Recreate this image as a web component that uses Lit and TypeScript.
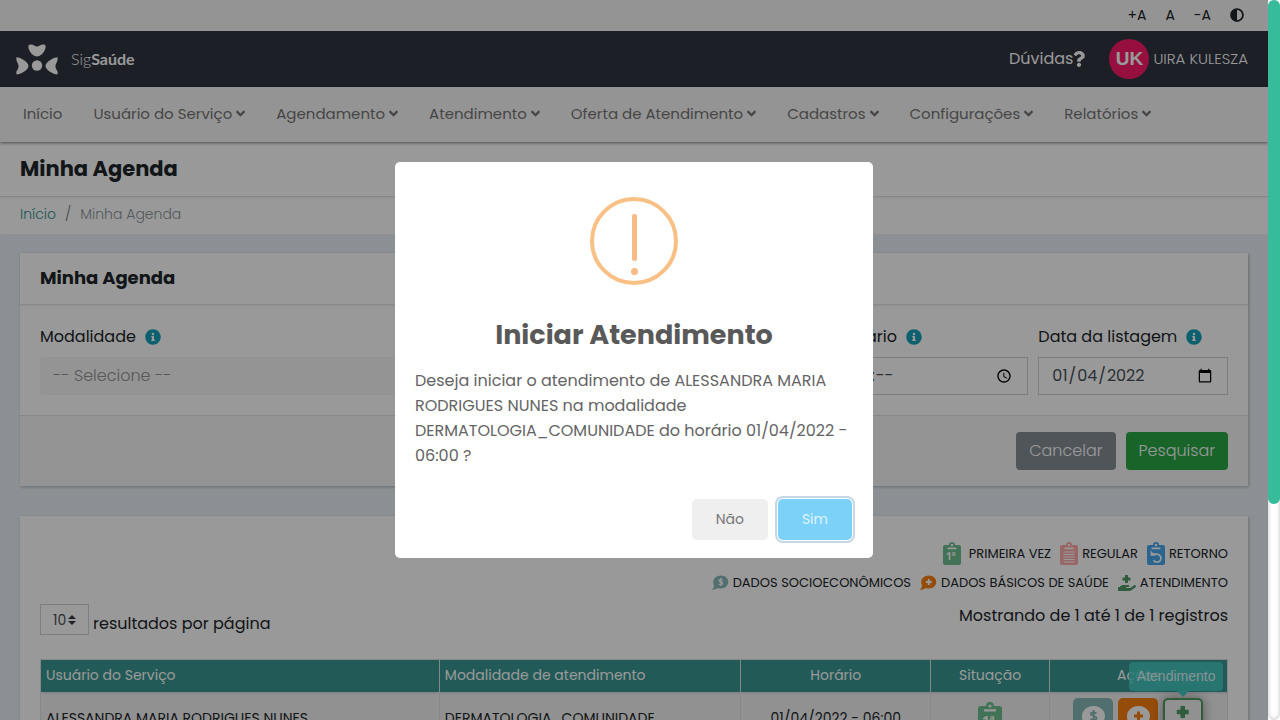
import { LitElement, html, css, svg } from "lit";
import { customElement, property } from "lit/decorators.js";

const INFO =
  "M256 8C119.043 8 8 119.083 8 256c0 136.997 111.043 248 248 248s248-111.003 248-248C504 119.083 392.957 8 256 8zm0 110c23.196 0 42 18.804 42 42s-18.804 42-42 42-42-18.804-42-42 18.804-42 42-42zm56 254c0 6.627-5.373 12-12 12h-88c-6.627 0-12-5.373-12-12v-24c0-6.627 5.373-12 12-12h12v-64h-12c-6.627 0-12-5.373-12-12v-24c0-6.627 5.373-12 12-12h64c6.627 0 12 5.373 12 12v100h12c6.627 0 12 5.373 12 12v24z";
const QUESTION =
  "M202.021 0C122.202 0 70.503 32.703 29.914 91.026c-7.363 10.58-5.093 25.086 5.178 32.874l43.138 32.709c10.373 7.865 25.132 6.026 33.253-4.148 25.049-31.381 43.63-49.449 82.757-49.449 30.764 0 68.816 19.799 68.816 49.631 0 22.552-18.617 34.134-48.993 51.164-35.423 19.86-82.299 44.576-82.299 106.405V320c0 13.255 10.745 24 24 24h72.471c13.255 0 24-10.745 24-24v-5.773c0-42.86 125.268-44.645 125.268-160.627C377.504 66.256 286.902 0 202.021 0zM192 373.459c-38.196 0-69.271 31.075-69.271 69.271 0 38.195 31.075 69.27 69.271 69.27s69.271-31.075 69.271-69.271-31.075-69.27-69.271-69.27z";
const ADJUST =
  "M8 256c0 136.966 111.033 248 248 248s248-111.034 248-248S392.966 8 256 8 8 119.033 8 256zm248 184V72c101.705 0 184 82.311 184 184 0 101.705-82.311 184-184 184z";
const ANGLE =
  "M143 352.3L7 216.3c-9.4-9.4-9.4-24.6 0-33.9l22.6-22.6c9.4-9.4 24.6-9.4 33.9 0l96.4 96.4 96.4-96.4c9.4-9.4 24.6-9.4 33.9 0l22.6 22.6c9.4 9.4 9.4 24.6 0 33.9l-136 136c-9.2 9.4-24.4 9.4-33.8 0z";
const HAND =
  "M159.88,175.82h64v64a16,16,0,0,0,16,16h64a16,16,0,0,0,16-16v-64h64a16,16,0,0,0,16-16v-64a16,16,0,0,0-16-16h-64v-64a16,16,0,0,0-16-16h-64a16,16,0,0,0-16,16v64h-64a16,16,0,0,0-16,16v64A16,16,0,0,0,159.88,175.82ZM568.07,336.13a39.91,39.91,0,0,0-55.93-8.47L392.47,415.84H271.86a16,16,0,0,1,0-32H330.1c16,0,30.75-10.87,33.37-26.61a32.06,32.06,0,0,0-31.62-37.38h-160a117.7,117.7,0,0,0-74.12,26.25l-46.5,37.74H15.87a16.11,16.11,0,0,0-16,16v96a16.11,16.11,0,0,0,16,16h347a104.8,104.8,0,0,0,61.7-20.27L559.6,392A40,40,0,0,0,568.07,336.13Z";

@customElement("sig-icon")
export class SigIcon extends LitElement {
  @property() name = "";

  static styles = css`
    :host { display: inline-flex; flex: none; }
    svg { display: block; }
    .board { width: var(--board-width, 18px); height: auto; }
    .mark { font: 700 10px "Open Sans", sans-serif; fill: #fff; }
  `;

  private board(content: unknown) {
    return html`<svg class="board" viewBox="0 0 18 24" aria-hidden="true">
      <path fill="currentColor" fill-rule="evenodd" d="M2 3h4a3 3 0 0 1 6 0h4a2 2 0 0 1 2 2v16a2 2 0 0 1-2 2H2a2 2 0 0 1-2-2V5a2 2 0 0 1 2-2zM9 1.800a1.200 1.200 0 1 0 0 2.400a1.200 1.200 0 1 0 0-2.400z"/>
      <rect x="4.500" y="5.400" width="9" height="1.800" rx=".6" fill="#fff"/>
      ${content}
    </svg>`;
  }

  private bubble(content: unknown) {
    return html`<svg width="17" height="16" viewBox="0 0 17 16" aria-hidden="true">
      <path fill="currentColor" d="M8.800 .5C13 .5 16.300 3.400 16.300 7S13 13.500 8.800 13.500c-1.200 0-2.300-.2-3.300-.6C4.200 14 2.500 14.800.6 14.800c-.4 0-.5-.4-.2-.7.700-.8 1.500-2 1.700-3.200C1.600 9.800 1.200 8.400 1.200 7c0-3.600 3.400-6.500 7.600-6.500z"/>
      ${content}
    </svg>`;
  }

  render() {
    const fa = (d: string, w: number, h: number, vw = 512) =>
      html`<svg width=${w} height=${h} viewBox="0 0 ${vw} 512" fill="currentColor" aria-hidden="true"><path d=${d}></path></svg>`;
    switch (this.name) {
      case "info": return fa(INFO, 16, 16);
      case "question": return fa(QUESTION, 12, 16, 384);
      case "adjust": return fa(ADJUST, 14, 14);
      case "angle": return fa(ANGLE, 9, 15, 320);
      case "hand": return fa(HAND, 18, 16, 576);
      case "hand-lg": return fa(HAND, 27, 24, 576);
      case "first": return this.board(svg`<text class="mark" x="3" y="18">1ª</text>`);
      case "regular":
        return this.board(svg`<path stroke="#fff" stroke-width="1.100" d="M3.500 10h11M3.500 12.500h11M3.500 15h11M3.500 17.500h11M3.500 20h11"/>`);
      case "return":
        return this.board(svg`<path fill="none" stroke="#fff" stroke-width="1.800" d="M5 12.200h5a4 4 0 1 1-3.500 6"/><path fill="#fff" d="M3.600 8.600v5.200h5.200z"/>`);
      case "money":
        return this.bubble(svg`<path fill="none" stroke="#fff" stroke-width="1.200" d="M10.700 5.200C9.800 4.400 7 4.300 7 5.700s3.700 1 3.700 2.600-3 1.500-3.900.5M8.800 3v8"/>`);
      case "health":
        return this.bubble(svg`<path stroke="#fff" stroke-width="2" d="M8.800 4v6M5.800 7h6"/>`);
      case "money-btn":
        return html`<svg width="26" height="24" viewBox="0 0 26 24" aria-hidden="true"><path fill="#fff" d="M13.500 0C20 0 25 4.500 25 10S20 20 13.500 20c-2 0-3.700-.4-5.200-1.100C6 21 3.500 22 1 22c1.500-1.500 2.500-3 3-5-1.500-2-2-4-2-7C2 4.500 7 0 13.500 0z"/><path fill="none" stroke="#88bab8" stroke-width="1.800" d="M16.400 7.400c-1.500-1.300-5.500-1.300-5.500.7s5.600 1.600 5.600 4-4.300 2.300-6 .7M13.600 4v12"/></svg>`;
      case "health-btn":
        return html`<svg width="26" height="24" viewBox="0 0 26 24" aria-hidden="true"><path fill="#fff" d="M13.500 0C20 0 25 4.500 25 10S20 20 13.500 20c-2 0-3.700-.4-5.200-1.100C6 21 3.500 22 1 22c1.500-1.500 2.500-3 3-5-1.500-2-2-4-2-7C2 4.500 7 0 13.500 0z"/><path stroke="#fa7f10" stroke-width="3" d="M13.500 5.500v9M9 10h9"/></svg>`;
      case "logo":
        return html`<svg width="42" height="31" viewBox="0 0 42 31" fill="currentColor" aria-hidden="true">
          <path d="M14 .5C17 0 19 2.500 21 2.500S25 0 28 .5c2 .300 2 2.500 1 5C27.500 9.500 24 12.500 21 12.500S14.500 9.500 13 5.500c-1-2.500-1-4.700 1-5z"/>
          <circle cx="21" cy="21.500" r="5.200"/>
          <path d="M.5 13.200c4 0 12 4.800 12 8.800S4.500 30.500.8 30.500C-.3 29 .5 27 1.600 25.500c1.300-2 1.300-4.300 0-6.500C.5 17 0 15 .5 13.200z"/>
          <path d="M41.500 13.200c-4 0-12 4.800-12 8.800s8 8.500 11.700 8.500c1.100-1.500.3-3.500-.8-5-1.300-2-1.300-4.300 0-6.500 1.100-2 1.600-4 1.100-5.800z"/>
        </svg>`;
      default: return null;
    }
  }
}

@customElement("app-root")
export class AppRoot extends LitElement {
  static styles = css`
    :host {
      display: flex;
      height: 100vh;
      overflow: hidden;
      font: 300 15px/24px "Poppins", Inter, sans-serif;
      color: #212529;
      background: #fff;
    }
    * { box-sizing: border-box; }
    a { color: inherit; text-decoration: none; }
    h1, h2, h3, p { margin: 0; }
    button, input, select { font: inherit; margin: 0; }
    .page { position: relative; flex: 1; min-width: 0; overflow: hidden; background: #e9f1f7; }
    .track { width: 12px; flex: none; background: #fff; box-shadow: inset 0 0 4px #bbb; border-radius: 6px; }
    .thumb { height: 70%; border-radius: 6px; background: #36bc9b; }

    .access { height: 31px; display: flex; align-items: center; justify-content: flex-end; gap: 19px; padding: 0 24px 2px; background: #f7f7f7; font-size: 14px; font-weight: 400; }
    .access button { display: flex; border: 0; padding: 0; background: none; color: inherit; }
    .top { height: 56px; display: flex; align-items: center; padding: 0 20px 0 16px; background: #2f343f; color: #fff; }
    .brand { display: flex; align-items: center; gap: 13px; flex: 1; font: 300 16px/24px Lato, sans-serif; }
    .brand b { font-weight: 700; }
    .help { display: flex; align-items: center; font-size: 16px; font-weight: 400; margin-right: 24px; }
    .user { display: flex; align-items: center; gap: 4px; font-size: 15px; }
    .avatar { display: grid; place-items: center; width: 40px; height: 40px; border-radius: 50%; background: #fb1a68; font: 700 19px/24px "Liberation Sans", sans-serif; }
    .menu { position: relative; height: 55px; display: flex; align-items: center; gap: 31px; padding: 0 23px 2px; background: #f7f7f7; color: #757575; box-shadow: 0 1px 3px rgba(0, 0, 0, .5); }
    .menu a { display: flex; align-items: center; gap: 4px; white-space: nowrap; font-weight: 400; }
    .title { height: 55px; padding: 14px 20px; background: #fff; border-bottom: 1px solid #e2e2e2; }
    .title h1 { font-size: 21px; line-height: 26px; font-weight: 700; }
    .crumbs { height: 37px; display: flex; gap: 9px; padding: 5px 20px; background: #fff; color: #8d959c; font-size: 14px; box-shadow: inset 0 2px 2px rgba(0, 0, 0, .04); }
    .crumbs a { color: #2f9390; }
    .crumbs i { font-style: normal; color: #6c757d; }

    .content { display: grid; gap: 30px; padding: 19px 20px; }
    .card { background: #fff; box-shadow: 1px 1px 3px rgba(0, 0, 0, .25); }
    .card-title { padding: 13px 20px 14px; font-size: 18px; line-height: 24px; font-weight: 700; border-bottom: 1px solid #e6e6e6; box-shadow: 0 1px 2px rgba(0, 0, 0, .07); }
    .form { display: grid; grid-template-columns: repeat(12, 1fr); gap: 10px; padding: 20px; }
    .wide { grid-column: span 8; }
    .small { grid-column: span 2; }
    .label { display: flex; align-items: center; gap: 9px; margin-bottom: 8px; font-size: 16px; font-weight: 400; white-space: nowrap; }
    .label sig-icon { color: #17a2b8; }
    .field { display: block; width: 100%; height: 38px; border: 1px solid #ced4da; border-radius: 0; background: #fff; padding: 6px 12px; color: #495057; font-size: 16px; font-weight: 400; }
    .field::-webkit-datetime-edit-ampm-field { display: none; }
    .modality { width: 100%; height: 38px; appearance: none; border: 0; border-radius: 4px; background: #f7f7f7; color: #939393; padding: 0 13px; font-size: 16px; opacity: 1; }
    .footer { display: flex; justify-content: flex-end; gap: 10px; padding: 16px 20px; background: #f7f7f7; border-top: 1px solid #e2e2e2; }
    .btn { height: 38px; border: 0; border-radius: 4px; padding: 0 13px; font-size: 16px; color: #fff; background: #868e96; }
    .btn.go { background: #28a745; }

    .list { padding: 23px 20px; }
    .legend { display: flex; justify-content: flex-end; gap: 9px; height: 29px; font-size: 13px; font-weight: 400; }
    .legend span { display: flex; align-items: center; gap: 4px; }
    .legend .first { gap: 8px; }
    .c-first { color: #70c090; }
    .c-regular { color: #ffabab; }
    .c-return { color: #48a8ee; }
    .c-money { color: #88bab8; }
    .c-health { color: #fa7f10; }
    .c-care { color: #4f9a66; }
    .status { --board-width: 24px; }
    .tools { display: flex; justify-content: space-between; padding-top: 7px; font-size: 16px; font-weight: 400; }
    .tools label { display: flex; align-items: flex-end; gap: 4px; line-height: 22px; }
    .count { width: 49px; height: 31px; appearance: none; border: 1px solid #ced4da; border-radius: 0; padding: 0 0 0 12px; font-size: 14px; color: #495057; background: #fff url("data:image/svg+xml,%3Csvg xmlns='http://www.w3.org/2000/svg' viewBox='0 0 4 5'%3E%3Cpath fill='%23343a40' d='M2 0L0 2h4zm0 5L0 3h4z'/%3E%3C/svg%3E") no-repeat right 12px center / 8px 10px; }
    table { width: 100%; margin-top: 24px; table-layout: fixed; border-collapse: collapse; font-size: 14px; }
    th, td { border: 1px solid #dee2e6; padding: 4px 5px; text-align: left; }
    th { height: 33px; padding: 3px 5px 5px; background: #379692; color: #fff; font-weight: 400; border-bottom: 2px solid #dee2e6; }
    td { height: 52px; padding: 4px 5px 6px; background: #f2f2f2; font-weight: 400; white-space: nowrap; }
    .mid { text-align: center; }
    .w1 { width: 33.600%; } .w2 { width: 25.400%; } .w3 { width: 16%; } .w4 { width: 10%; }
    td sig-icon { vertical-align: middle; }
    .actions { display: flex; justify-content: center; gap: 5px; }
    .act { position: relative; display: flex; justify-content: center; align-items: center; width: 40px; height: 40px; border: 0; border-radius: 5px; padding: 0; background: #88bab8; }
    .act.orange { background: #fa7f10; }
    .act.care { border: 2px solid #4f9a66; background: #f0f2f0; box-shadow: 0 0 12px rgba(0, 0, 0, .4); color: #4f9a66; }
    .tip { position: absolute; right: -22px; bottom: 45px; padding: 4px 8px; border-radius: 4px; background: rgba(70, 208, 200, .8); color: rgba(255, 255, 255, .85); font: 400 14px/21px "Liberation Sans", sans-serif; }
    .tip::after { content: ""; position: absolute; right: 34px; top: 100%; border: 6px solid transparent; border-top-color: #46c5bf; border-bottom: 0; }

    .overlay { position: absolute; inset: 0; display: flex; align-items: center; justify-content: center; background: rgba(0, 0, 0, .4); }
    .modal { width: 478px; max-width: 94%; border-radius: 5px; background: #fff; color: #5c5c5c; }
    .warn { display: block; width: 88px; height: 88px; margin: 35px auto 0; }
    .modal h2 { margin-top: 32px; text-align: center; font-size: 27px; line-height: 36px; font-weight: 700; color: #595959; }
    .modal p { margin: 15px 20px 0; font-size: 16px; line-height: 25px; font-weight: 400; color: #646464; }
    .choices { display: flex; justify-content: flex-end; gap: 10px; padding: 31px 21px 18px; }
    .choices button { height: 41px; border: 0; border-radius: 5px; padding: 0 24px 2px; font-size: 14px; font-weight: 400; background: #efefef; color: #777; }
    .choices .yes { background: #7cd1f9; color: #dff4fe; box-shadow: 0 0 0 1px #fff, 0 0 0 3px #c3d7e7; }
  `;

  private menu = ["Usuário do Serviço", "Agendamento", "Atendimento", "Oferta de Atendimento", "Cadastros", "Configurações", "Relatórios"];

  render() {
    return html`
      <div class="page">
        <div class="access">
          <button>+A</button><button>A</button><button>-A</button>
          <button aria-label="Contraste"><sig-icon name="adjust"></sig-icon></button>
        </div>
        <header class="top">
          <a class="brand" href="#"><sig-icon name="logo"></sig-icon><span>Sig<b>Saúde</b></span></a>
          <a class="help" href="#">Dúvidas<sig-icon name="question"></sig-icon></a>
          <a class="user" href="#"><span class="avatar">UK</span>UIRA KULESZA</a>
        </header>
        <nav class="menu">
          <a href="#">Início</a>
          ${this.menu.map((m) => html`<a href="#">${m}<sig-icon name="angle"></sig-icon></a>`)}
        </nav>
        <div class="title"><h1>Minha Agenda</h1></div>
        <div class="crumbs"><a href="#">Início</a><i>/</i><span>Minha Agenda</span></div>
        <main class="content">
          <form class="card">
            <h3 class="card-title">Minha Agenda</h3>
            <div class="form">
              <div class="wide">
                <label class="label" for="modality">Modalidade<sig-icon name="info"></sig-icon></label>
                <select class="modality" id="modality" disabled><option>-- Selecione --</option></select>
              </div>
              <div class="small">
                <label class="label" for="time">Horário<sig-icon name="info"></sig-icon></label>
                <input class="field" id="time" type="time" />
              </div>
              <div class="small">
                <label class="label" for="date">Data da listagem<sig-icon name="info"></sig-icon></label>
                <input class="field" id="date" type="date" value="2022-01-04" />
              </div>
            </div>
            <div class="footer">
              <button type="button" class="btn">Cancelar</button>
              <button type="button" class="btn go">Pesquisar</button>
            </div>
          </form>
          <section class="card list">
            <div class="legend">
              <span class="first"><sig-icon class="c-first" name="first"></sig-icon>PRIMEIRA VEZ</span>
              <span><sig-icon class="c-regular" name="regular"></sig-icon>REGULAR</span>
              <span><sig-icon class="c-return" name="return"></sig-icon>RETORNO</span>
            </div>
            <div class="legend">
              <span><sig-icon class="c-money" name="money"></sig-icon>DADOS SOCIOECONÔMICOS</span>
              <span><sig-icon class="c-health" name="health"></sig-icon>DADOS BÁSICOS DE SAÚDE</span>
              <span><sig-icon class="c-care" name="hand"></sig-icon>ATENDIMENTO</span>
            </div>
            <div class="tools">
              <label><select class="count"><option>10</option></select><span>resultados por página</span></label>
              <p>Mostrando de 1 até 1 de 1 registros</p>
            </div>
            <table>
              <thead>
                <tr>
                  <th class="w1">Usuário do Serviço</th>
                  <th class="w2">Modalidade de atendimento</th>
                  <th class="w3 mid">Horário</th>
                  <th class="w4 mid">Situação</th>
                  <th class="mid">Ações</th>
                </tr>
              </thead>
              <tbody>
                <tr>
                  <td>ALESSANDRA MARIA RODRIGUES NUNES</td>
                  <td>DERMATOLOGIA_COMUNIDADE</td>
                  <td class="mid">01/04/2022 - 06:00</td>
                  <td class="mid"><sig-icon class="c-first status" name="first"></sig-icon></td>
                  <td>
                    <div class="actions">
                      <button class="act" aria-label="Dados socioeconômicos"><sig-icon name="money-btn"></sig-icon></button>
                      <button class="act orange" aria-label="Dados básicos de saúde"><sig-icon name="health-btn"></sig-icon></button>
                      <button class="act care"><sig-icon name="hand-lg"></sig-icon><span class="tip">Atendimento</span></button>
                    </div>
                  </td>
                </tr>
              </tbody>
            </table>
          </section>
        </main>
        <div class="overlay">
          <div class="modal" role="dialog" aria-modal="true" aria-labelledby="ask">
            <svg class="warn" viewBox="0 0 88 88" aria-hidden="true">
              <circle cx="44" cy="44" r="42" fill="none" stroke="#f9c086" stroke-width="4"/>
              <rect x="42" y="17" width="5" height="47" rx="2" fill="#f8bb86"/>
              <circle cx="44.500" cy="74.500" r="3.500" fill="#f8bb86"/>
            </svg>
            <h2 id="ask">Iniciar Atendimento</h2>
            <p>Deseja iniciar o atendimento de ALESSANDRA MARIA RODRIGUES NUNES na modalidade DERMATOLOGIA_COMUNIDADE do horário 01/04/2022 - 06:00 ?</p>
            <div class="choices"><button>Não</button><button class="yes">Sim</button></div>
          </div>
        </div>
      </div>
      <div class="track"><div class="thumb"></div></div>
    `;
  }
}
